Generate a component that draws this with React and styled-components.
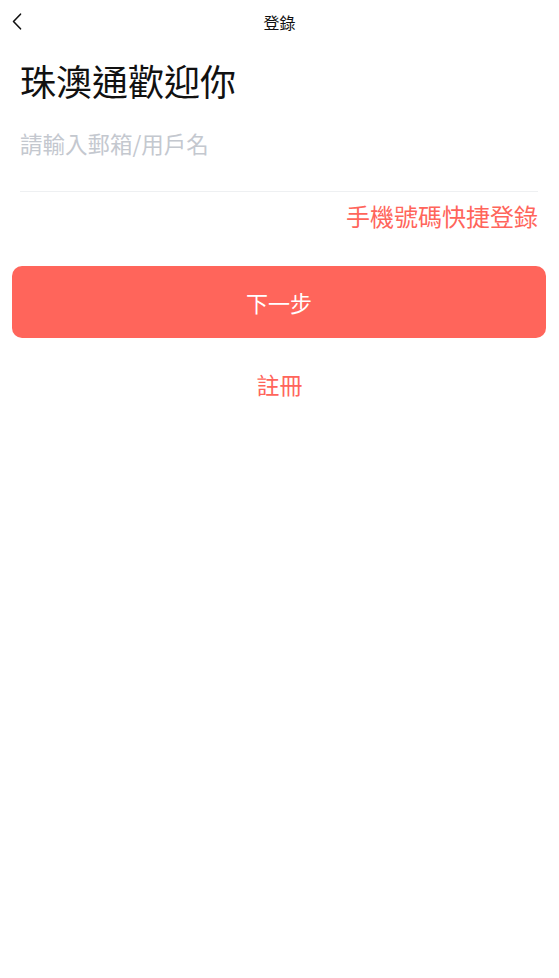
import React, { useState } from 'react';
import styled, { createGlobalStyle } from 'styled-components';

const GlobalStyle = createGlobalStyle`
  html, body {
    margin: 0;
    padding: 0;
    background: #fff;
    font-family: "Noto Sans CJK TC", "Noto Sans CJK SC", "Noto Sans", sans-serif;
  }
  * { box-sizing: border-box; }
`;

export default function App() {
    const [account, setAccount] = useState('');

    return (
        <Page>
            <GlobalStyle />
            <Header>
                <BackButton aria-label="back">
                    <svg width="10" height="17" viewBox="0 0 10 17" fill="none">
                        <path d="M8.5 1.2L1.5 8.5L8.5 15.8" stroke="#111" strokeWidth="1.6" strokeLinecap="round" strokeLinejoin="round" />
                    </svg>
                </BackButton>
                <HeaderTitle>登錄</HeaderTitle>
            </Header>

            <Content>
                <Welcome>珠澳通歡迎你</Welcome>
                <AccountInput
                    value={account}
                    onChange={(e) => setAccount(e.target.value)}
                    placeholder="請輸入郵箱/用戶名"
                />
                <QuickLogin>手機號碼快捷登錄</QuickLogin>
            </Content>

            <NextButton>下一步</NextButton>
            <RegisterLink>註冊</RegisterLink>
        </Page>
    )
}

const Page = styled.div`
    width: 100%;
    min-height: 978px;
    background: #fff;
    display: flex;
    flex-direction: column;
`

const Header = styled.div`
    position: relative;
    height: 44px;
    display: flex;
    align-items: center;
    justify-content: center;
`

const BackButton = styled.button`
    position: absolute;
    left: 8px;
    top: 13px;
    border: none;
    background: none;
    padding: 0 4px;
    display: flex;
    cursor: pointer;
`

const HeaderTitle = styled.div`
    font-size: 16px;
    color: #111;
`

const Content = styled.div`
    padding: 0 21px 0 20px;
    display: flex;
    flex-direction: column;
`

const Welcome = styled.h1`
    margin: 12px 0 0 0;
    font-size: 36px;
    font-weight: 400;
    line-height: 48px;
    color: #111;
`

const AccountInput = styled.input`
    margin-top: 14px;
    height: 74px;
    border: none;
    border-bottom: 1px solid #eef0f2;
    outline: none;
    padding: 0 0 23px 0;
    font-size: 22.5px;
    font-family: inherit;
    color: #222;
    background: transparent;

    &::placeholder {
        color: #c4c8cf;
    }
`

const QuickLogin = styled.div`
    align-self: flex-end;
    margin-top: 8px;
    font-size: 24px;
    line-height: 32px;
    color: #ff655b;
`

const NextButton = styled.button`
    margin: 34px 13px 0 12px;
    height: 72px;
    border: none;
    border-radius: 10px;
    background: #ff655b;
    color: #fff;
    font-size: 22px;
    font-family: inherit;
    cursor: pointer;
`

const RegisterLink = styled.div`
    margin-top: 30px;
    text-align: center;
    font-size: 23px;
    line-height: 32px;
    color: #ff655b;
`
